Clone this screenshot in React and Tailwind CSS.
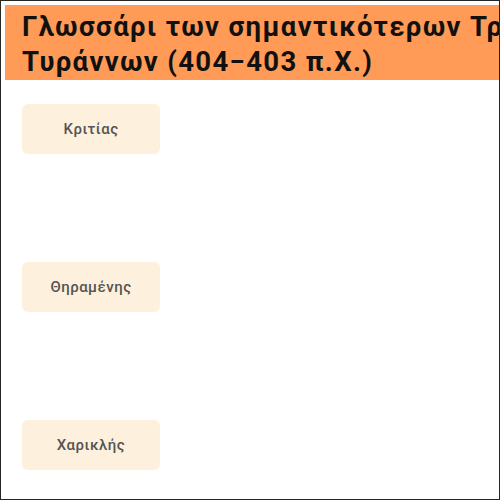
const terms = ["Κριτίας", "Θηραμένης", "Χαρικλής"];

export default function App() {
  return (
    <div
      className="w-[500px] h-[500px] overflow-hidden border border-[#2a2420] bg-white pt-[4px] pl-[4px]"
      style={{ fontFamily: 'Roboto, "Noto Sans", sans-serif' }}
    >
      <div className="w-[680px] bg-[#ff9a57] pl-[17px] pt-[4px] pb-[1px]">
        <h1 className="text-[27.5px] leading-[35px] tracking-[1.35px] font-bold text-[#111]">
          Γλωσσάρι των σημαντικότερων Τριάκοντα Τυράννων (404−403 π.Χ.)
        </h1>
      </div>
      <div className="flex flex-col gap-[108px] pl-[17px] pt-[24px]">
        {terms.map((t) => (
          <div
            key={t}
            className="w-[138px] h-[50px] rounded-[6px] bg-[#fdf0dc] flex items-center justify-center text-[15px] tracking-[0.5px] text-[#555] font-medium"
          >
            {t}
          </div>
        ))}
      </div>
    </div>
  );
}
